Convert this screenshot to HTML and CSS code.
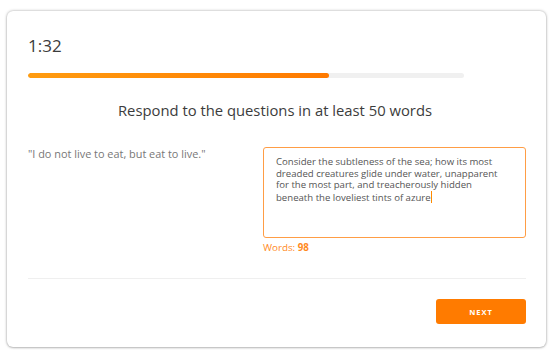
FILE: index.html
```html
<!DOCTYPE html>
<html>
<head>
<meta charset="utf-8">
<link rel="stylesheet" href="styles.css">
</head>
<body>
<div class="card">
  <div class="timer">1:32</div>
  <div class="progress"><div class="fill" style="width:69%"></div></div>
  <h1 class="title">Respond to the questions in at least 50 words</h1>
  <div class="row">
    <div class="quote">"I do not live to eat, but eat to live."</div>
    <div class="answer">
      <div class="box">Consider the subtleness of the sea; how its most dreaded creatures glide under water, unapparent for the most part, and treacherously hidden beneath the loveliest tints of azure<span class="caret"></span></div>
      <div class="count">Words: <b>98</b></div>
    </div>
  </div>
  <div class="divider"></div>
  <div class="footer"><button class="next">NEXT</button></div>
</div>
</body>
</html>
```
FILE: styles.css
```css
html, body { margin: 0; background: #fff; }
body {
  padding: 11px 8px 9px 7px;
  font-family: "Open Sans", Lato, sans-serif;
}
.card {
  box-sizing: border-box;
  width: 539px;
  height: 336px;
  border-radius: 6px;
  background: #fff;
  box-shadow: 0 0 3px rgba(0,0,0,0.35), 0 1px 2px rgba(0,0,0,0.15);
  padding: 25px 20px 0 21px;
  display: flex;
  flex-direction: column;
}
.timer {
  font-size: 17px;
  line-height: 20px;
  color: #3c3c3c;
  height: 20px;
}
.progress {
  margin-top: 17px;
  width: 436px;
  height: 5px;
  border-radius: 3px;
  background: #f0f0f0;
  overflow: hidden;
}
.fill {
  height: 100%;
  border-radius: 3px;
  background: linear-gradient(90deg, #ff9c10, #ff7a00);
}
.title {
  margin: 22px 0 0;
  font-size: 14.8px;
  font-weight: 400;
  line-height: 20px;
  color: #3c3c3c;
  text-align: center;
  padding-right: 4px;
}
.row {
  margin-top: 27px;
  display: flex;
  justify-content: space-between;
}
.quote {
  font-size: 10.9px;
  line-height: 14px;
  color: #777;
}
.answer {
  width: 263px;
}
.box {
  box-sizing: border-box;
  height: 91px;
  border: 1.5px solid #ff9d45;
  border-radius: 3px;
  padding: 8px 20px 0 12px;
  font-size: 9.6px;
  line-height: 11.7px;
  color: #555;
}
.caret {
  display: inline-block;
  width: 1px;
  height: 12px;
  background: #ff8a00;
  vertical-align: -2px;
}
.count {
  margin-top: 4px;
  font-size: 9.8px;
  line-height: 12px;
  color: #ff8a1e;
}
.count b { font-weight: 700; }
.divider {
  margin-top: 24px;
  width: 498px;
  height: 1px;
  background: #efefef;
}
.footer {
  margin-top: 20px;
  width: 498px;
  display: flex;
  justify-content: flex-end;
}
.next {
  width: 90px;
  height: 25px;
  border: none;
  border-radius: 3px;
  background: #ff7b00;
  color: #fff;
  font-family: "Open Sans", sans-serif;
  font-weight: 700;
  font-size: 7.5px;
  letter-spacing: 1px;
  padding: 0;
}
```
